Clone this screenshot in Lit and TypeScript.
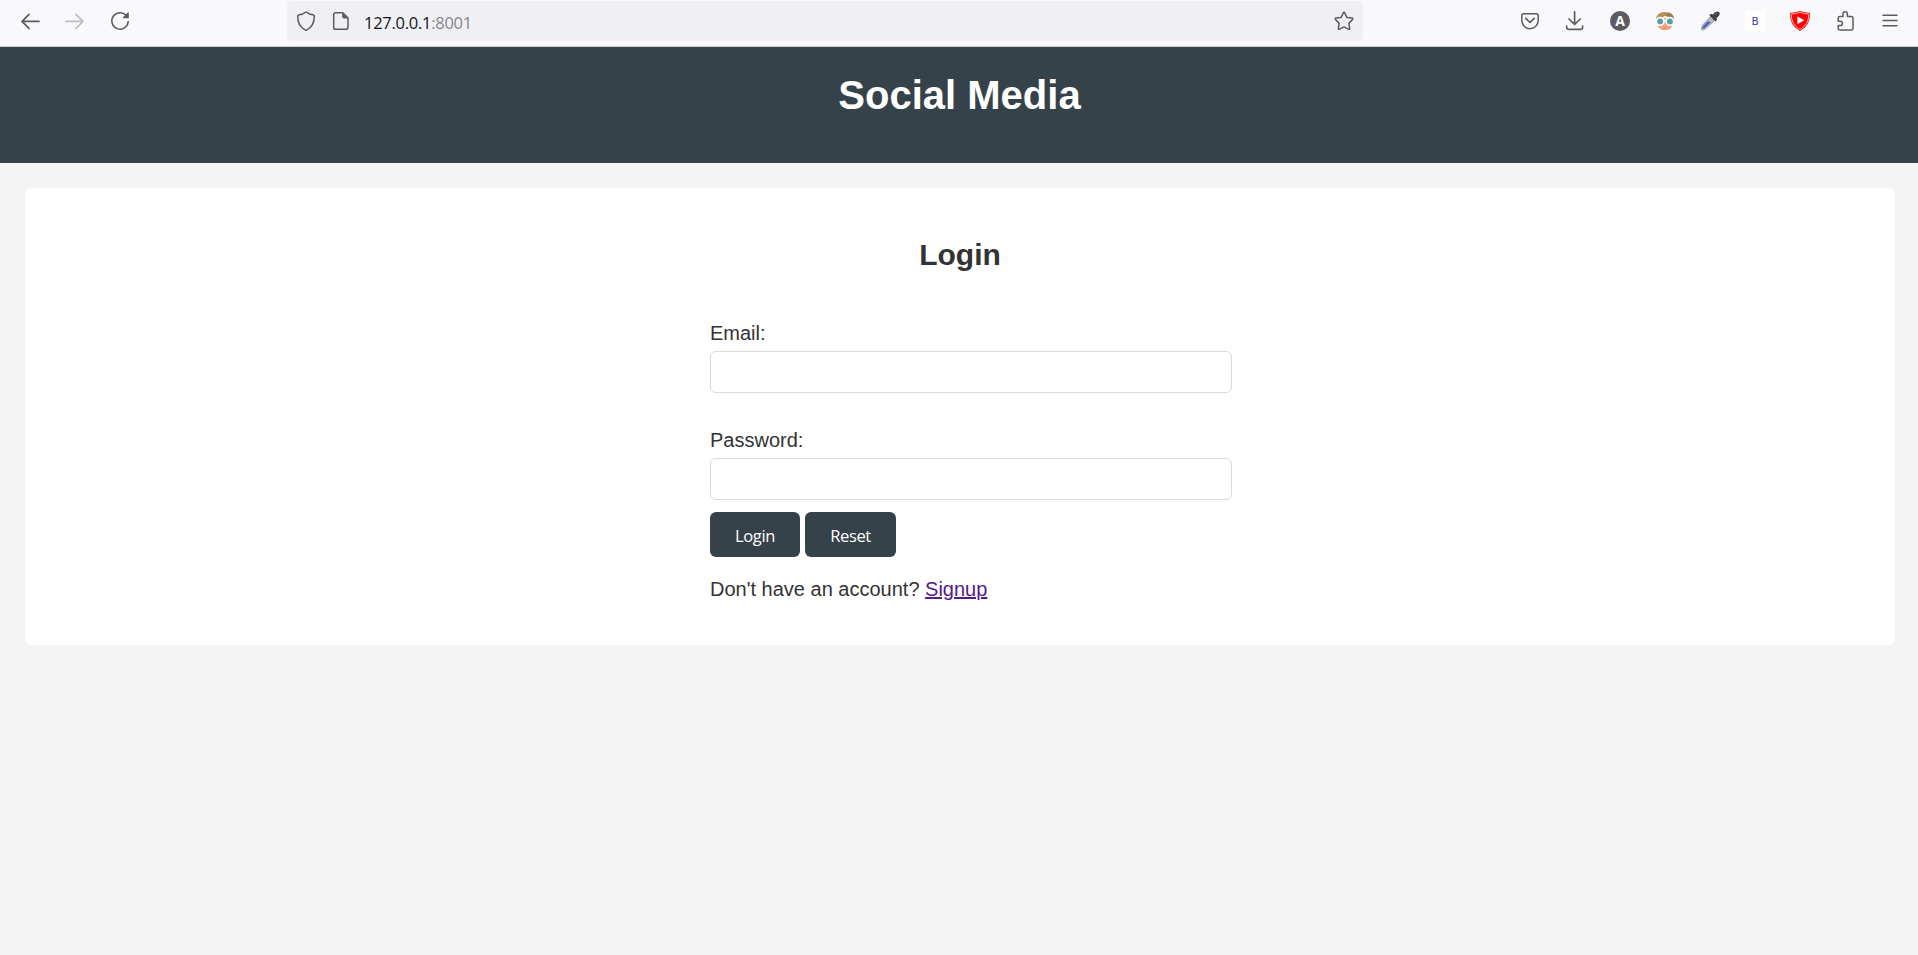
import { LitElement, html, css, svg } from "lit";
import { customElement } from "lit/decorators.js";

const icon = (body: unknown) => html`<svg class="icon" viewBox="0 0 20 20" aria-hidden="true">${body}</svg>`;

const back = svg`<path class="line" d="M19 10.4H2M9 3.4L2 10.4L9 17.4"/>`;
const forward = svg`<path class="line faded" d="M1 10.4H18M11 3.4L18 10.4L11 17.4"/>`;
const reload = svg`<path class="line thin" d="M16.6 5A8.2 8.2 0 1 0 18.2 10.4"/><path class="solid" d="M18.8 1.4V7.2H13.2Q12.4 6.8 13 6.2L17.8 1.4Q18.4 1 18.8 1.4Z"/>`;
const shield = svg`<path class="line thin" d="M10 1C12 2.6 15 3.7 17.6 4.1Q18.3 4.3 18.3 5C18.4 11.8 15.6 16.6 10.6 19.1Q10 19.4 9.4 19.1C4.4 16.6 1.6 11.8 1.7 5Q1.7 4.3 2.4 4.1C5 3.7 8 2.6 10 1Z"/>`;
const page = svg`<path class="line thin" d="M4.7 1.8H11.8L17 7V16.2Q17 18.3 14.9 18.3H4.7Q2.7 18.3 2.7 16.2V3.8Q2.7 1.8 4.7 1.8Z"/><path class="solid" d="M11.2 1.4V5.6Q11.2 7.6 13.2 7.6H17.3Z"/>`;
const star = svg`<path class="line thin" d="M9.3 1.9Q10 .7 10.7 1.9L12.8 6.4L17.9 7.1Q19.5 7.4 18.4 8.6L14.8 12.2L15.7 17.3Q15.8 18.8 14.4 18.2L10 15.9L5.6 18.2Q4.2 18.8 4.3 17.3L5.2 12.2L1.6 8.6Q.5 7.4 2.1 7.1L7.2 6.4Z"/>`;
const pocket = svg`<path class="line thin" d="M3.7 2.8H16.3Q18.2 2.8 18.2 4.7V9.5A8.2 8.2 0 0 1 1.8 9.5V4.7Q1.8 2.8 3.7 2.8Z"/><path class="line" d="M5.7 7.3L10 11.5L14.3 7.3"/>`;
const download = svg`<path class="line" d="M9.6 .8V13.2M4 8L9.6 13.5L15.2 8M1.7 15.2V16.8Q1.7 18.4 3.3 18.4H16Q17.6 18.4 17.6 16.8V15.2"/>`;
const account = svg`<circle class="badge" cx="10" cy="10" r="10"/><text class="initial" x="10" y="15">A</text>`;
const face = svg`
  <path fill="#f5a27e" d="M1.8 7H18.2L17.2 15Q15.5 19.2 10 19.2Q4.5 19.2 2.8 15Z"/>
  <path fill="#b8905c" d="M1 9.5Q.8 1 10 1Q19.2 1 19 9.5L16.5 7Q12.5 6.6 10.5 4.8Q7 7 3.5 7Z"/>
  <path fill="#9a7a4c" d="M9.5 4Q14 4.5 18.9 8.5Q18.8 3.5 14.5 1.8Q12 3.8 9.5 4Z"/>
  <circle cx="5.1" cy="10.4" r="3.8" fill="#57a0a9" stroke="#f4f8f9" stroke-width="1.7"/>
  <circle cx="14.9" cy="10.4" r="3.8" fill="#57a0a9" stroke="#f4f8f9" stroke-width="1.7"/>
  <path d="M0 10H1.5M8.8 9.6H11.2M18.5 10H20" stroke="#f4f8f9" stroke-width="1.8"/>
  <path d="M8.4 16.6Q10 17.4 11.6 16.6" stroke="#d9765f" fill="none"/>`;
const dropper = svg`
  <path fill="#b8b8bb" stroke="#8a8a8d" stroke-width=".8" d="M10.6 5.5L14.6 9.5L5.2 18Q3.7 19 1.5 18.8Q1.2 16.5 2.5 14.3Z"/>
  <path fill="#3f63d6" d="M7.7 10.5L11 11L4.7 17Q3.4 18 2.5 17.5Q2.5 15.6 3.7 14.5Z"/>
  <path fill="#3f3f41" d="M9.3 4.2L11 2.8L12.6 3.5L15 1.2Q17.5-.4 19.3 1.2Q20.5 3 18.8 5L16.5 7.3L17 8.8L15.4 10.5Z"/>
  <path d="M14.8 3.8L16.7 2.2" stroke="#85858a"/>`;
const letterTile = svg`<rect width="20" height="20" fill="#fff"/><text class="tile" x="10" y="13.8">B</text>`;
const play = svg`
  <path fill="#f00" d="M10 0Q14 1.7 20 1.9Q20.6 14 10 20Q-.6 14 0 1.9Q6 1.7 10 0Z"/>
  <path fill="none" stroke="#ffd5d5" stroke-width=".8" d="M10 1.3Q14 2.9 18.8 3.1Q19 13.4 10 18.6Q1 13.4 1.2 3.1Q6 2.9 10 1.3Z"/>
  <path fill="#fff" d="M7.4 5.4L14.4 9.3L7.4 13.2Z"/>`;
const puzzle = svg`<path class="line thin" d="M3.2 9V7.2Q3.2 5.6 4.8 5.6H8V3A2.2 2.2 0 0 1 12.4 3V5.6H16.4Q18 5.6 18 7.2V17.4Q18 19 16.4 19H4.8Q3.2 19 3.2 17.4V14.6H5.2A2.2 2.2 0 0 0 5.2 10.2H3.2Z"/>`;
const menu = svg`<path class="line thin" d="M3 4.2H17M3 9.5H17M3 14.8H17"/>`;

@customElement("browser-bar")
export class BrowserBar extends LitElement {
  static styles = css`
    :host {
      display: flex;
      align-items: flex-start;
      box-sizing: border-box;
      height: 47px;
      padding: 1px 18px 0 20px;
      background: #f9f9fb;
      border-bottom: 1px solid #ccccce;
      font-family: "Open Sans", "Noto Sans", sans-serif;
    }
    .group { display: flex; gap: 25px; padding-top: 10px; }
    .extensions { margin-left: auto; }
    .address {
      display: flex;
      align-items: center;
      box-sizing: border-box;
      width: 1076px;
      height: 40px;
      margin-left: 157px;
      padding: 0 9px;
      border-radius: 5px;
      background: #f0f0f4;
    }
    .address .icon + .icon { margin-left: 15px; }
    .url { margin-left: 13px; flex: 1; font-size: 16.5px; line-height: 22px; padding-top: 4px; color: #15141a; letter-spacing: -0.27px; }
    .port { color: #86858d; }
    .icon { display: block; flex: none; width: 20px; height: 20px; overflow: visible; }
    .line { fill: none; stroke: #5b5b66; stroke-width: 1.7; stroke-linecap: round; stroke-linejoin: round; }
    .thin { stroke-width: 1.5; }
    .faded { stroke: #bcbcc1; }
    .solid, .badge { fill: #5b5b66; }
    .initial { fill: #fff; font: 700 14px "Open Sans", sans-serif; text-anchor: middle; }
    .tile { fill: #3c3ac0; font: 10.5px "DejaVu Sans", sans-serif; text-anchor: middle; }
  `;

  render() {
    return html`
      <div class="group">${[back, forward, reload].map(icon)}</div>
      <div class="address">
        ${icon(shield)}${icon(page)}
        <span class="url">127.0.0.1<span class="port">:8001</span></span>
        ${icon(star)}
      </div>
      <div class="group extensions">
        ${[pocket, download, account, face, dropper, letterTile, play, puzzle, menu].map(icon)}
      </div>
    `;
  }
}

@customElement("app-root")
export class AppRoot extends LitElement {
  static styles = css`
    :host {
      display: block;
      min-height: 100vh;
      background: #f4f4f4;
      color: #333;
      font: 20px/22px "Liberation Sans", Arial, sans-serif;
    }
    .header { box-sizing: border-box; height: 116px; padding: 24px 0 0 1px; background: #36424a; color: #fff; text-align: center; }
    .title { margin: 0; font-size: 40px; line-height: 48px; }
    .card { box-sizing: border-box; height: 457px; margin: 25px 23px 0 25px; padding-top: 49px; border-radius: 6px; background: #fff; }
    .heading { margin: 0 0 49px; font-size: 30px; line-height: 36px; text-align: center; }
    .form { width: 500px; margin: 0 auto; }
    .label { display: block; }
    .input {
      display: block;
      box-sizing: border-box;
      width: 522px;
      height: 42px;
      margin: 7px 0 36px;
      padding: 10px;
      border: 1px solid #d9d9d9;
      border-radius: 6px;
      background: #fff;
      font: inherit;
    }
    .input.last { margin-bottom: 12px; }
    .actions { display: flex; gap: 5px; }
    .button {
      width: 90px;
      height: 45px;
      padding: 3px 0 0;
      border: 0;
      border-radius: 6px;
      background: #36424a;
      color: #fff;
      font: 16.5px/22px "Open Sans", "Noto Sans", sans-serif;
      letter-spacing: -0.4px;
    }
    .button.reset { width: 91px; }
    .signup { margin: 21px 0 0; }
    .link { color: #551a8b; text-decoration: underline; }
  `;

  render() {
    return html`
      <browser-bar></browser-bar>
      <header class="header"><h1 class="title">Social Media</h1></header>
      <main class="card">
        <h2 class="heading">Login</h2>
        <form class="form" @submit=${(e: Event) => e.preventDefault()}>
          <label class="label" for="email">Email:</label>
          <input class="input" id="email" type="email" />
          <label class="label" for="password">Password:</label>
          <input class="input last" id="password" type="password" />
          <div class="actions">
            <button class="button" type="submit">Login</button>
            <button class="button reset" type="reset">Reset</button>
          </div>
          <p class="signup">Don't have an account? <a class="link" href="#">Signup</a></p>
        </form>
      </main>
    `;
  }
}
